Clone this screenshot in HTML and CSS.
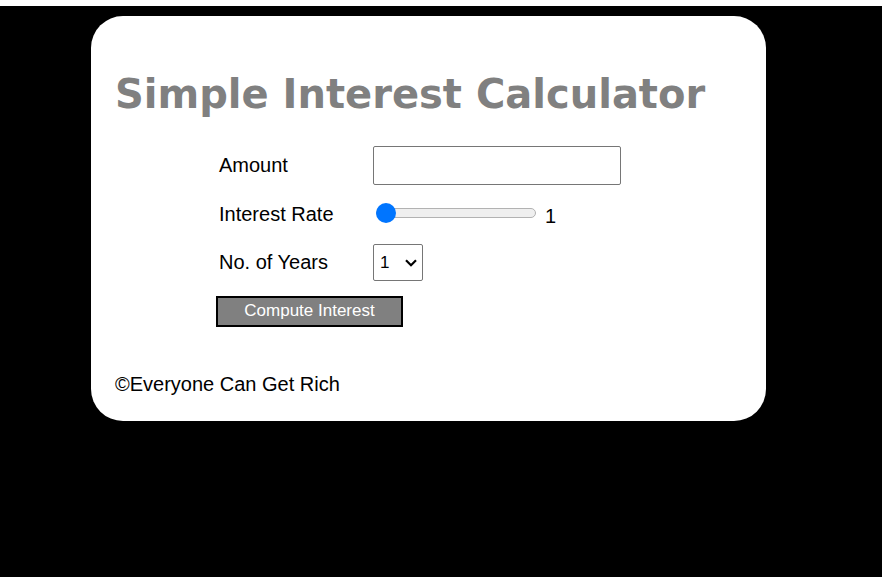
FILE: index.html
```
<!DOCTYPE html>
<html lang="en">
<head>
  <meta charset="utf-8">
  <title>Simple Interest Calculator</title>
  <link rel="stylesheet" href="styles.css">
</head>
<body>
  <main class="card">
    <h1 class="title">Simple Interest Calculator</h1>
    <form class="form">
      <label class="label" for="principal">Amount</label>
      <div class="field"><input class="amount" type="number" id="principal"></div>

      <label class="label" for="rate">Interest Rate</label>
      <div class="field">
        <input class="slider" type="range" id="rate" min="1" max="20" step="0.25" value="1">
        <output class="rate-value" for="rate">1</output>
      </div>

      <label class="label" for="years">No. of Years</label>
      <div class="field">
        <div class="select-wrap">
          <select class="years" id="years">
            <option>1</option>
            <option>2</option>
            <option>3</option>
            <option>4</option>
            <option>5</option>
            <option>6</option>
            <option>7</option>
            <option>8</option>
            <option>9</option>
            <option>10</option>
          </select>
          <svg class="chevron" viewBox="0 0 12 8" aria-hidden="true"><path d="M1 1.2 6 6.2 11 1.2"/></svg>
        </div>
      </div>

      <button class="compute" type="button">Compute Interest</button>
    </form>
    <footer class="footer">©Everyone Can Get Rich</footer>
  </main>
</body>
</html>
```
FILE: styles.css
```
* {
  box-sizing: border-box;
}

html {
  background: #000;
}

body {
  margin: 0;
  padding: 10px 25px 10px 0;
  border-top: 6px solid #fff;
  background: #000;
  color: #000;
  font-family: "Liberation Sans", Arial, sans-serif;
  font-size: 20px;
  line-height: 24px;
}

.card {
  max-width: 675px;
  margin: 0 auto;
  padding: 54px 24px 25px;
  border-radius: 32px;
  background: #fff;
}

.title {
  margin: 0;
  color: gray;
  font-family: Verdana, "DejaVu Sans", sans-serif;
  font-size: 40px;
  font-weight: bold;
  line-height: 48px;
}

.form {
  display: grid;
  grid-template-columns: 154px auto;
  grid-template-rows: 39px 35px 37px auto;
  row-gap: 12px;
  justify-content: start;
  align-items: center;
  margin: 28px 0 45px 104px;
}

.label {
  padding-bottom: 2px;
}

.field {
  display: flex;
  align-items: center;
}

.amount,
.years {
  border: 1px solid #767676;
  border-radius: 2px;
  background: #fff;
  color: #000;
  font: 17px "Liberation Sans", Arial, sans-serif;
}

.amount {
  width: 248px;
  height: 39px;
  padding: 0 8px;
}

.slider {
  width: 160px;
  height: 20px;
  margin: 0 9px 3px 3px;
  appearance: none;
  background: none;
}

.slider::-webkit-slider-runnable-track {
  height: 10px;
  border: 1px solid #b2b2b2;
  border-radius: 5px;
  background: #efefef;
}

.slider::-webkit-slider-thumb {
  width: 20px;
  height: 20px;
  margin: -6px 0 0 -1px;
  appearance: none;
  border-radius: 50%;
  background: #0075ff;
}

.rate-value {
  padding-top: 2px;
}

.select-wrap {
  position: relative;
}

.years {
  display: block;
  width: 50px;
  height: 37px;
  padding: 0 6px;
  appearance: none;
}

.chevron {
  position: absolute;
  top: 15px;
  right: 6px;
  width: 12px;
  height: 8px;
  fill: none;
  stroke: #000;
  stroke-width: 2.2;
  pointer-events: none;
}

.compute {
  grid-column: 1 / -1;
  justify-self: start;
  width: 187px;
  height: 31px;
  margin: 3px 0 0 -3px;
  padding: 0 0 2px;
  border: 2px solid #000;
  background: gray;
  color: #fff;
  font: 17px "Liberation Sans", Arial, sans-serif;
}
```
